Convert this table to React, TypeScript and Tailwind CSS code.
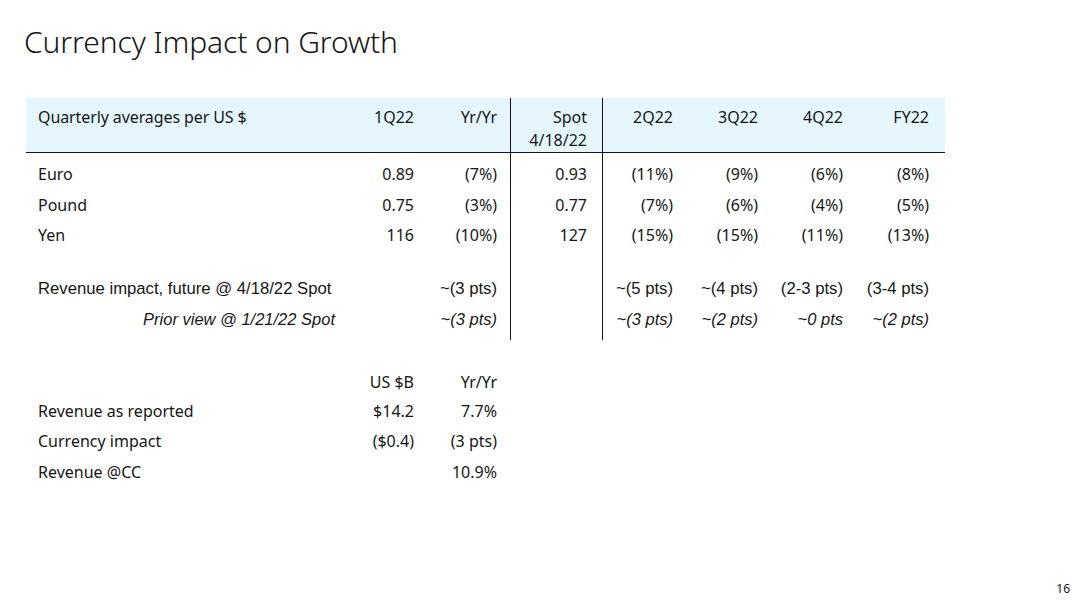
import React from 'react';

const plex = { fontFamily: '"Noto Sans", Inter, sans-serif' };

// right-aligned numeric columns: width + right padding
const cols = [
  { w: 'w-[86px]', pr: 'pr-[12px]' },
  { w: 'w-[84px]', pr: 'pr-[13px]' },
  { w: 'w-[93px]', pr: 'pr-[15px]' },
  { w: 'w-[85px]', pr: 'pr-[15px]' },
  { w: 'w-[85px]', pr: 'pr-[15px]' },
  { w: 'w-[85px]', pr: 'pr-[15px]' },
  { w: 'w-[87px]', pr: 'pr-[16px]' },
];

function Row({
  label,
  cells,
  h = 'h-[30.5px]',
  labelClass = '',
  cellClass = '',
}: {
  label: React.ReactNode;
  cells: string[];
  h?: string;
  labelClass?: string;
  cellClass?: string;
}) {
  return (
    <div className={`flex items-center ${h}`}>
      <div className={`w-[314px] pl-[12px] ${labelClass}`}>{label}</div>
      {cols.map((c, i) => (
        <div
          key={i}
          className={`${c.w} ${c.pr} h-full flex items-center justify-end text-right ${
            i === 2 ? 'border-x border-[#161616]' : ''
          } ${cellClass}`}
        >
          {cells[i] ?? ''}
        </div>
      ))}
    </div>
  );
}

export default function App() {
  return (
    <div className="w-[1092px] h-[612px] bg-white text-[#161616] relative overflow-hidden" style={plex}>
      <h1 className="pl-[24px] pt-[22px] text-[30px] font-light leading-[40px] tracking-[-0.1px]">
        Currency Impact on Growth
      </h1>

      <div className="ml-[26px] mt-[36px] w-[919px] text-[16px]">
        {/* Header band */}
        <div className="flex bg-[#e5f6ff] h-[55px] border-b-[1.5px] border-[#161616] leading-[23px]">
          <div className="w-[314px] pl-[12px] pt-[8px] tracking-[-0.1px]">Quarterly averages per US $</div>
          {['1Q22', 'Yr/Yr', 'Spot\n4/18/22', '2Q22', '3Q22', '4Q22', 'FY22'].map((t, i) => (
            <div
              key={i}
              className={`${cols[i].w} ${cols[i].pr} pt-[8px] text-right whitespace-pre-line ${
                i === 2 ? 'border-x border-[#161616]' : ''
              }`}
            >
              {t}
            </div>
          ))}
        </div>

        <Row label="" cells={[]} h="h-[6px]" />
        <Row label="Euro" cells={['0.89', '(7%)', '0.93', '(11%)', '(9%)', '(6%)', '(8%)']} />
        <Row label="Pound" cells={['0.75', '(3%)', '0.77', '(7%)', '(6%)', '(4%)', '(5%)']} />
        <Row label="Yen" cells={['116', '(10%)', '127', '(15%)', '(15%)', '(11%)', '(13%)']} />
        <Row label="" cells={[]} h="h-[23px]" />
        <Row
          label="Revenue impact, future @ 4/18/22 Spot"
          labelClass="text-[16.7px] [font-family:'Liberation_Sans',Arial,sans-serif]"
          cellClass="text-[16.7px] [font-family:'Liberation_Sans',Arial,sans-serif]"
          cells={['', '~(3 pts)', '', '~(5 pts)', '~(4 pts)', '(2-3 pts)', '(3-4 pts)']}
        />
        <Row
          label={<span className="block text-right pr-[5px]">Prior view @ 1/21/22 Spot</span>}
          labelClass="italic text-[16.5px] [font-family:'Liberation_Sans',Arial,sans-serif] !pl-0 w-[314px]"
          cellClass="italic text-[16.5px] [font-family:'Liberation_Sans',Arial,sans-serif]"
          cells={['', '~(3 pts)', '', '~(3 pts)', '~(2 pts)', '~0 pts', '~(2 pts)']}
        />
        <Row label="" cells={[]} h="h-[5px]" />

        {/* Revenue summary */}
        <div className="mt-[29px]">
          <div className="flex items-center h-[27px]">
            <div className="w-[314px]" />
            <div className={`${cols[0].w} ${cols[0].pr} text-right`}>US $B</div>
            <div className={`${cols[1].w} ${cols[1].pr} text-right`}>Yr/Yr</div>
          </div>
          {[
            ['Revenue as reported', '$14.2', '7.7%'],
            ['Currency impact', '($0.4)', '(3 pts)'],
            ['Revenue @CC', '', '10.9%'],
          ].map(([l, a, b]) => (
            <div key={l} className="flex items-center h-[30.5px]">
              <div className="w-[314px] pl-[12px]">{l}</div>
              <div className={`${cols[0].w} ${cols[0].pr} text-right`}>{a}</div>
              <div className={`${cols[1].w} ${cols[1].pr} text-right`}>{b}</div>
            </div>
          ))}
        </div>
      </div>

      <div className="absolute right-[22px] bottom-[17px] text-[12px] leading-none">16</div>
    </div>
  );
}
